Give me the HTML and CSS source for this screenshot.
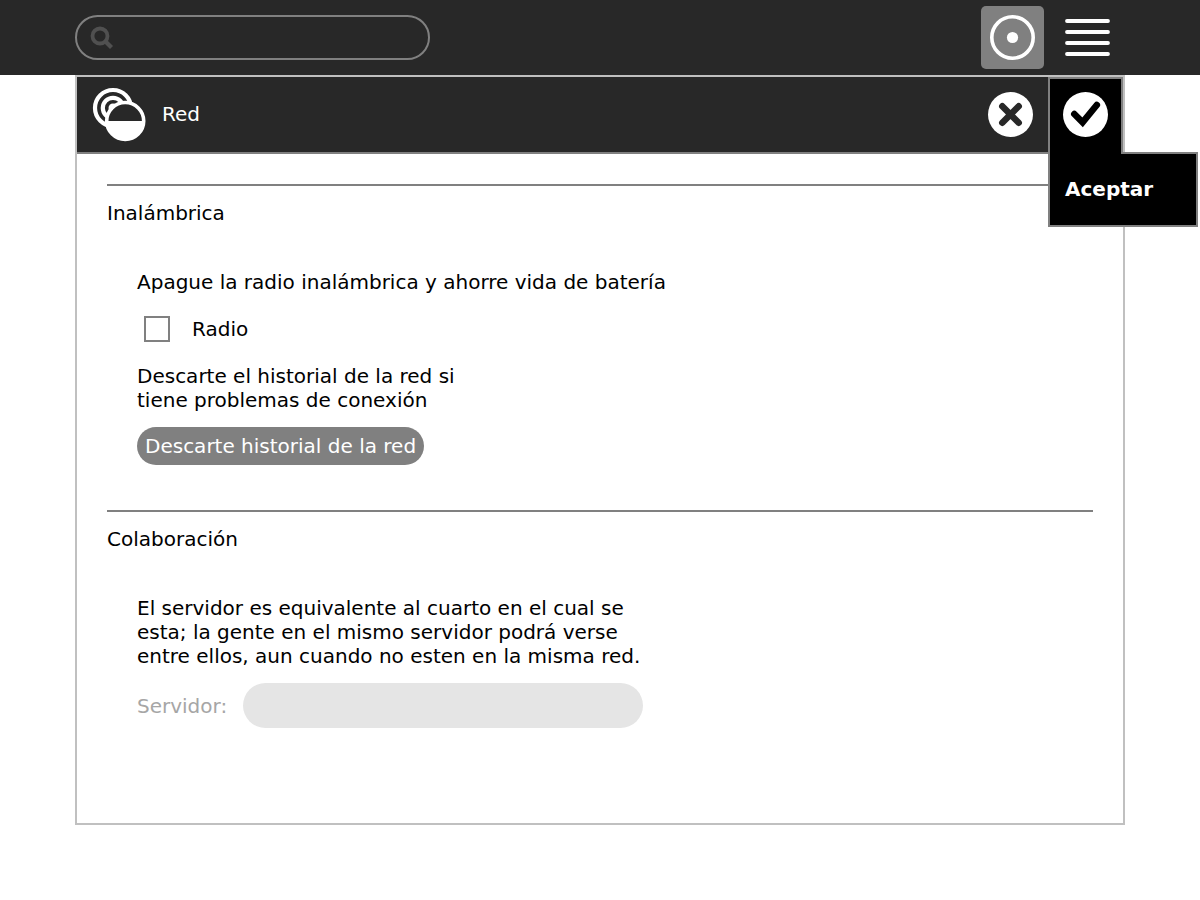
FILE: index.html
```html
<!DOCTYPE html>
<html lang="es">
<head>
<meta charset="utf-8">
<title>Red</title>
<meta name="viewport" content="width=device-width, initial-scale=1">
<link rel="stylesheet" href="styles.css">
</head>
<body>
<header class="topbar">
  <div class="search">
    <svg class="search-icon" viewBox="0 0 24 24" aria-hidden="true"><circle cx="10" cy="10" r="7.5" fill="none" stroke="#505050" stroke-width="3.8"/><path d="M15 15l6.5 6.5" stroke="#505050" stroke-width="4.2"/></svg>
    <input class="search-input" type="search" aria-label="Buscar">
  </div>
  <nav class="views">
    <button class="view view-active" type="button" aria-label="Vista de favoritos"><svg class="icon" viewBox="0 0 45 45"><circle cx="22.5" cy="22.5" r="20.7" fill="none" stroke="#fff" stroke-width="3.6"/><circle cx="22.5" cy="22.5" r="5.6" fill="#fff"/></svg></button>
    <button class="view" type="button" aria-label="Vista de lista"><svg class="icon" viewBox="0 0 45 45"><path d="M2 6h41M2 17h41M2 28h41M2 39h41" stroke="#fff" stroke-width="3.8" stroke-linecap="round"/></svg></button>
  </nav>
</header>
<main class="panel">
  <div class="panel-header">
    <svg class="network-icon" viewBox="0 0 55 55" aria-hidden="true">
      <g fill="none" stroke="#fff" stroke-width="4.2"><circle cx="21" cy="21" r="18"/><circle cx="21" cy="21" r="10.2"/></g>
      <circle cx="21" cy="21" r="4.5" fill="#fff"/>
      <circle cx="33.2" cy="34" r="18.5" fill="#282828" stroke="#fff" stroke-width="3.6"/>
      <path d="M14.7 34h37a18.5 18.5 0 0 1-37 0z" fill="#fff"/>
    </svg>
    <h1 class="panel-title">Red</h1>
    <button class="tool" type="button" aria-label="Cancelar"><svg class="icon" viewBox="0 0 45 45"><circle cx="22.5" cy="22.5" r="22.5" fill="#fff"/><path d="M14.3 14.3l16.4 16.4M30.7 14.3L14.3 30.7" stroke="#282828" stroke-width="6.5" stroke-linecap="round"/></svg></button>
    <div class="accept-wrap">
      <button class="tool tool-open" type="button" aria-label="Aceptar"><svg class="icon" viewBox="0 0 45 45"><circle cx="22.5" cy="22.5" r="22.5" fill="#fff"/><path d="M11.3 22l8.3 8.3L33.8 13" fill="none" stroke="#000" stroke-width="6.6" stroke-linecap="round"/></svg></button>
      <div class="palette" role="tooltip">Aceptar</div>
    </div>
  </div>
  <div class="content">
    <section class="section">
      <h2 class="section-title">Inalámbrica</h2>
      <div class="section-body">
        <p class="text">Apague la radio inalámbrica y ahorre vida de batería</p>
        <label class="check-row"><input class="check" type="checkbox">Radio</label>
        <p class="text">Descarte el historial de la red si<br>tiene problemas de conexión</p>
        <button class="discard" type="button">Descarte historial de la red</button>
      </div>
    </section>
    <section class="section">
      <h2 class="section-title">Colaboración</h2>
      <div class="section-body">
        <p class="text">El servidor es equivalente al cuarto en el cual se<br>esta; la gente en el mismo servidor podrá verse<br>entre ellos, aun cuando no esten en la misma red.</p>
        <div class="server-row">
          <label class="server-label" for="server">Servidor:</label>
          <input class="server-input" id="server" type="text" disabled>
        </div>
      </div>
    </section>
  </div>
</main>
</body>
</html>
```
FILE: styles.css
```css
* { box-sizing: border-box; }
body {
  margin: 0;
  min-height: 100vh;
  display: flex;
  flex-direction: column;
  background: #fff;
  color: #000;
  font: 20px/24px "DejaVu Sans", sans-serif;
}
button, input { font: inherit; }
button { border: 0; padding: 0; cursor: pointer; }
.icon { display: block; width: 45px; height: 45px; }

.topbar {
  display: flex;
  align-items: center;
  justify-content: space-between;
  height: 75px;
  padding: 0 75px;
  background: #282828;
}
.search {
  display: flex;
  align-items: center;
  gap: 8px;
  width: 355px;
  height: 45px;
  padding: 0 13px;
  border: 2px solid #808080;
  border-radius: 23px;
}
.search-icon { flex: none; width: 24px; height: 24px; }
.search-input {
  flex: 1;
  min-width: 0;
  border: 0;
  outline: 0;
  background: transparent;
  color: #fff;
}
.views { display: flex; align-items: center; gap: 12px; padding-right: 6px; }
.view {
  display: grid;
  place-items: center;
  width: 63px;
  height: 63px;
  border-radius: 5px;
  background: transparent;
}
.view-active { background: #808080; }

.panel {
  flex: 1;
  margin: 0 75px 75px;
  border: 2px solid #c0c0c0;
}
.panel-header {
  display: flex;
  height: 77px;
  padding-left: 15px;
  border-bottom: 2px solid #808080;
  background: #282828;
  color: #fff;
}
.network-icon { align-self: center; flex: none; width: 55px; height: 55px; }
.panel-title {
  flex: 1;
  align-self: center;
  margin: 0;
  padding: 0 0 2px 15px;
  font-size: 20px;
  font-weight: 400;
}
.tool {
  display: grid;
  place-items: center;
  width: 75px;
  height: 75px;
  background: transparent;
}
.accept-wrap { position: relative; z-index: 1; }
.tool-open {
  position: relative;
  z-index: 2;
  height: 77px;
  padding-bottom: 4px;
  border: 2px solid #808080;
  border-bottom: 0;
  background: #000;
}
.palette {
  position: absolute;
  top: 75px;
  left: 0;
  display: flex;
  align-items: center;
  width: 150px;
  height: 75px;
  padding: 0 0 2px 15px;
  border: 2px solid #808080;
  background: #000;
  font-weight: 700;
}

.content { padding: 30px; }
.section { padding-bottom: 45px; border-top: 2px solid #808080; }
.section-title { margin: 15px 0 45px; font-size: 20px; font-weight: 400; }
.section-body {
  display: flex;
  flex-direction: column;
  align-items: flex-start;
  gap: 15px;
  padding-left: 30px;
}
.text { margin: 0; }
.check-row {
  display: flex;
  align-items: center;
  gap: 22px;
  height: 40px;
  padding-left: 7px;
}
.check {
  appearance: none;
  width: 26px;
  height: 26px;
  margin: 0;
  border: 2px solid #808080;
  background: #fff;
}
.check:checked { background: #808080; }
.discard {
  height: 38px;
  padding: 0 8px;
  border-radius: 19px;
  background: #808080;
  color: #fff;
}
.server-row { display: flex; align-items: center; gap: 16px; }
.server-label { color: #a6a6a6; }
.server-input {
  width: 400px;
  height: 45px;
  padding: 0 15px;
  border: 0;
  border-radius: 23px;
  background: #e5e5e5;
}
```
